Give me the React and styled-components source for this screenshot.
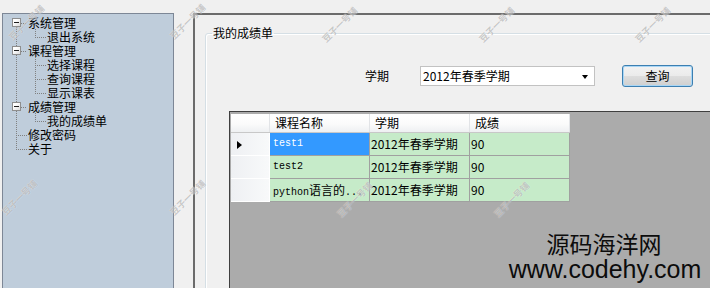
import React from "react";
import styled, { createGlobalStyle } from "styled-components";

const GlobalStyle = createGlobalStyle`
  body {
    margin: 0;
    background: #f0f0f0;
    font-family: "Noto Sans CJK SC", "Liberation Sans", sans-serif;
    font-size: 12px;
    color: #000;
    overflow: hidden;
  }
`;

const Page = styled.div`
  position: relative;
  width: 710px;
  height: 288px;
  overflow: hidden;
  display: flex;
  gap: 19px;
  padding: 13px 0 0 2px;
  box-sizing: border-box;
`;

const Sidebar = styled.div`
  width: 172px;
  flex-shrink: 0;
  box-sizing: border-box;
  background: #bfcddb;
  border: 1px solid #7d8796;
  border-bottom: none;
  height: 300px;
`;

const dots = (dir) =>
  `repeating-linear-gradient(${dir}, #808080 0 1px, transparent 1px 2px)`;

const TreeList = styled.div`
  position: relative;
  padding-top: 2px;

  &::before {
    content: "";
    position: absolute;
    left: 13px;
    top: 9px;
    bottom: 7px;
    width: 1px;
    background: ${dots("to bottom")};
  }
`;

const Row = styled.div`
  position: relative;
  height: 14px;
  line-height: 14px;
  display: flex;
  align-items: center;
  padding-left: ${(p) => (p.$level ? 44 : 25)}px;
  white-space: nowrap;

  &::after {
    content: "";
    position: absolute;
    top: 7px;
    height: 1px;
    left: ${(p) => (p.$level ? 32 : p.$box ? 18 : 13)}px;
    width: ${(p) => (p.$level ? 11 : p.$box ? 6 : 11)}px;
    background: ${dots("to right")};
  }
`;

const ExpandBox = styled.span`
  position: absolute;
  left: 9px;
  top: 2px;
  width: 9px;
  height: 9px;
  box-sizing: border-box;
  border: 1px solid #8e8e8e;
  background: linear-gradient(135deg, #ffffff 30%, #dcdcdc);
  z-index: 1;

  &::before {
    content: "";
    position: absolute;
    left: 1px;
    top: 3px;
    width: 5px;
    height: 1px;
    background: #1e1e1e;
  }
`;

const Children = styled.div`
  position: relative;

  &::before {
    content: "";
    position: absolute;
    left: 32px;
    top: -1px;
    bottom: 7px;
    width: 1px;
    background: ${dots("to bottom")};
  }
`;

const Main = styled.div`
  width: 560px;
  flex-shrink: 0;
  border-top: 2px solid #6b6b6b;
  border-left: 2px solid #6b6b6b;
  padding: 11px 0 0 10px;
  box-sizing: border-box;
`;

const GroupBox = styled.fieldset`
  margin: 0;
  padding: 0;
  height: 320px;
  border: 1px solid #d5dfe5;
  border-radius: 3px;
  box-shadow: inset 1px 1px 0 #ffffff;

  legend {
    margin-left: 6px;
    padding: 0 1px;
    line-height: 14px;
    font-size: 12px;
  }
`;

const QueryRow = styled.div`
  display: flex;
  align-items: center;
  height: 22px;
  margin-top: 25px;
  padding-left: 159px;
`;

const Label = styled.span`
  width: 55px;
  line-height: 14px;
`;

const Combo = styled.div`
  position: relative;
  width: 175px;
  height: 20px;
  box-sizing: border-box;
  background: #fff;
  border: 1px solid #c2c2c2;
  padding-left: 2px;
  line-height: 18px;

  &::after {
    content: "";
    position: absolute;
    right: 6px;
    top: 8px;
    border-left: 3.5px solid transparent;
    border-right: 3.5px solid transparent;
    border-top: 4px solid #000;
  }
`;

const Button = styled.button`
  margin-left: 27px;
  width: 71px;
  height: 22px;
  border: 1px solid #3c7fb1;
  border-radius: 3px;
  background: linear-gradient(#f2f2f2 0%, #ebebeb 48%, #dddddd 52%, #cfcfcf 100%);
  box-shadow: inset 0 0 0 1px #a9d6f5;
  font-family: inherit;
  font-size: 12px;
  line-height: 14px;
  padding: 0;
  color: #000;
`;

const Grid = styled.div`
  margin: 24px 0 0 23px;
  height: 220px;
  background: #ababab;
  border-top: 1px solid #3f3f3f;
  border-left: 1px solid #3f3f3f;
  padding: 2px 0 0 1px;
`;

const GridRow = styled.div`
  display: grid;
  grid-template-columns: 39px 100px 100px 100px;
  width: 339px;
  height: ${(p) => (p.$head ? 18 : 22)}px;
  border-bottom: 1px solid ${(p) => (p.$head ? "#c8c8c8" : "#a0a0a0")};
`;

const HeadCell = styled.div`
  background: linear-gradient(#ffffff 0%, #fbfbfb 55%, #eef0f2 100%);
  border-right: 1px solid #e2e4e7;
  padding-left: 5px;
  line-height: 18px;
`;

const RowHeader = styled.div`
  position: relative;
  background: linear-gradient(to right, #eef0f3, #f8f9fa);
  border-right: 1px solid #ffffff;
  border-bottom: 1px solid #ffffff;
  margin-bottom: -1px;

  ${(p) =>
    p.$current &&
    `&::after {
      content: "";
      position: absolute;
      left: 6px;
      top: 8px;
      border-top: 4px solid transparent;
      border-bottom: 4px solid transparent;
      border-left: 5px solid #000;
    }`}
`;

const Cell = styled.div`
  background: ${(p) => (p.$selected ? "#3399ff" : "#c6ebc9")};
  color: ${(p) => (p.$selected ? "#fff" : "#000")};
  border-right: 1px solid #a0a0a0;
  padding-left: ${(p) => (p.$mono ? 3 : 1)}px;
  line-height: 22px;
  font-family: ${(p) =>
    p.$mono
      ? `"Liberation Mono", "Noto Sans CJK SC", monospace`
      : `"Noto Sans CJK SC", "Liberation Sans", sans-serif`};
  font-size: ${(p) => (p.$mono ? 10 : 12)}px;
  white-space: nowrap;
  overflow: hidden;
`;

const Cjk = styled.span`
  font-family: "Noto Sans CJK SC", sans-serif;
  font-size: 12px;
`;

const Mark = styled.span`
  position: absolute;
  left: ${(p) => p.$x - 26}px;
  top: ${(p) => p.$y - 6}px;
  width: 52px;
  text-align: center;
  font-size: 9px;
  font-weight: bold;
  line-height: 12px;
  color: rgba(120, 120, 120, 0.4);
  text-shadow: 0 0 1px rgba(255, 255, 255, 0.8);
  transform: rotate(-45deg);
  pointer-events: none;
`;

const SiteMark = styled.div`
  position: absolute;
  left: 503px;
  top: 230px;
  width: 204px;
  text-align: center;
  color: #0c0c0c;
  pointer-events: none;
`;

const SiteName = styled.div`
  font-size: 23px;
  line-height: 26px;
  margin-right: 2px;
`;

const SiteUrl = styled.div`
  font-family: "Liberation Sans", Arial, sans-serif;
  font-size: 25px;
  line-height: 26px;
`;

const tree = [
  { label: "系统管理", children: ["退出系统"] },
  { label: "课程管理", children: ["选择课程", "查询课程", "显示课表"] },
  { label: "成绩管理", children: ["我的成绩单"] },
  { label: "修改密码" },
  { label: "关于" },
];

const rows = [
  { name: "test1", term: "2012年春季学期", score: "90" },
  { name: "test2", term: "2012年春季学期", score: "90" },
  { name: "python语言的...", term: "2012年春季学期", score: "90" },
];

const marks = [
  [27, 23], [188, 22], [340, 25], [497, 25], [653, 25],
  [20, 198], [188, 198], [355, 200], [512, 200],
];

function renderName(name) {
  if (name.startsWith("python")) {
    return (
      <>
        python<Cjk>语言的</Cjk>...
      </>
    );
  }
  return name;
}

export default function App() {
  return (
    <>
      <GlobalStyle />
      <Page>
        <Sidebar>
          <TreeList>
            {tree.map((node) => (
              <React.Fragment key={node.label}>
                <Row $box={!!node.children}>
                  {node.children && <ExpandBox />}
                  {node.label}
                </Row>
                {node.children && (
                  <Children>
                    {node.children.map((c) => (
                      <Row key={c} $level={1}>
                        {c}
                      </Row>
                    ))}
                  </Children>
                )}
              </React.Fragment>
            ))}
          </TreeList>
        </Sidebar>

        <Main>
          <GroupBox>
            <legend>我的成绩单</legend>
            <QueryRow>
              <Label>学期</Label>
              <Combo>2012年春季学期</Combo>
              <Button>查询</Button>
            </QueryRow>
            <Grid>
              <GridRow $head>
                <HeadCell />
                <HeadCell>课程名称</HeadCell>
                <HeadCell>学期</HeadCell>
                <HeadCell>成绩</HeadCell>
              </GridRow>
              {rows.map((r, i) => (
                <GridRow key={i}>
                  <RowHeader $current={i === 0} />
                  <Cell $mono $selected={i === 0}>
                    {renderName(r.name)}
                  </Cell>
                  <Cell>{r.term}</Cell>
                  <Cell>{r.score}</Cell>
                </GridRow>
              ))}
            </Grid>
          </GroupBox>
        </Main>

        {marks.map(([x, y], i) => (
          <Mark key={i} $x={x} $y={y}>
            豆子一号铺
          </Mark>
        ))}

        <SiteMark>
          <SiteName>源码海洋网</SiteName>
          <SiteUrl>www.codehy.com</SiteUrl>
        </SiteMark>
      </Page>
    </>
  );
}
